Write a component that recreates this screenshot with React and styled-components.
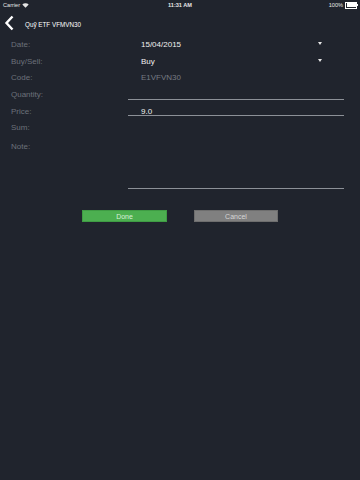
import React from 'react'
import styled, { createGlobalStyle } from 'styled-components'

const GlobalStyle = createGlobalStyle`
  html, body {
    margin: 0;
    padding: 0;
    background: #20242d;
  }
  body {
    font-family: "Liberation Sans", Arial, sans-serif;
  }
`

function App() {
  return (
    <Screen>
      <GlobalStyle />
      <StatusBar>
        <StatusLeft>
          Carrier
          <svg width="7" height="5" viewBox="0 0 7 5">
            <path d="M0.3 1.6 A4.5 4.5 0 0 1 6.7 1.6 L3.5 4.8 Z" fill="#e6e6e6" />
          </svg>
        </StatusLeft>
        <StatusTime>11:31 AM</StatusTime>
        <StatusRight>
          100%
          <Battery>
            <BatteryFill />
          </Battery>
        </StatusRight>
      </StatusBar>

      <NavBar>
        <BackButton>
          <svg width="10" height="16" viewBox="0 0 10 16">
            <polyline points="8.5,1.5 2.5,8 8.5,14.5" fill="none" stroke="#ffffff" strokeWidth="2.4" />
          </svg>
        </BackButton>
        <Title>Quỹ ETF VFMVN30</Title>
      </NavBar>

      <Form>
        <Row h={17}>
          <Label>Date:</Label>
          <Select>
            <Value>15/04/2015</Value>
            <Caret />
          </Select>
        </Row>
        <Row h={17}>
          <Label>Buy/Sell:</Label>
          <Select>
            <Value>Buy</Value>
            <Caret />
          </Select>
        </Row>
        <Row h={16}>
          <Label>Code:</Label>
          <Value muted>E1VFVN30</Value>
        </Row>
        <Row h={18}>
          <Label>Quantity:</Label>
          <Input h={14} defaultValue="" />
        </Row>
        <Row h={16}>
          <Label>Price:</Label>
          <Input h={12} defaultValue="9.0" />
        </Row>
        <Row h={16}>
          <Label>Sum:</Label>
          <Value />
        </Row>
        <NoteRow>
          <NoteLabel>Note:</NoteLabel>
          <NoteArea />
        </NoteRow>
      </Form>

      <Actions>
        <ActionButton kind="done">Done</ActionButton>
        <ActionButton kind="cancel">Cancel</ActionButton>
      </Actions>
    </Screen>
  )
}

export default App

const Screen = styled.div`
  width: 360px;
  height: 480px;
  background: #20242d;
  color: #e6e6e6;
  overflow: hidden;
`

const StatusBar = styled.div`
  height: 10px;
  display: flex;
  align-items: center;
  justify-content: space-between;
  padding: 0 3px;
  font-size: 5.6px;
  color: #e6e6e6;
  position: relative;
`

const StatusLeft = styled.div`
  display: flex;
  align-items: center;
  gap: 2px;
`

const StatusTime = styled.div`
  position: absolute;
  left: 0;
  right: 0;
  text-align: center;
  font-weight: bold;
  pointer-events: none;
`

const StatusRight = styled.div`
  display: flex;
  align-items: center;
  gap: 2px;
`

const Battery = styled.div`
  width: 9px;
  height: 4px;
  border: 0.5px solid #ffffff;
  padding: 0.5px;
  position: relative;
  display: flex;

  &::after {
    content: '';
    position: absolute;
    right: -2px;
    top: 1px;
    width: 1px;
    height: 2px;
    background: #ffffff;
  }
`

const BatteryFill = styled.div`
  flex: 1;
  background: #ffffff;
`

const NavBar = styled.div`
  height: 26px;
  display: flex;
  align-items: center;
  padding-left: 4px;
`

const BackButton = styled.div`
  width: 21px;
  height: 16px;
  display: flex;
  align-items: center;
  margin-top: 0px;
`

const Title = styled.div`
  font-size: 6.3px;
  color: #ffffff;
  margin-top: 2px;
`

const Form = styled.div`
  display: flex;
  flex-direction: column;
`

const Row = styled.div`
  height: ${p => p.h}px;
  display: grid;
  grid-template-columns: 128px 216px;
  align-items: center;
`

const Label = styled.div`
  padding-left: 11px;
  font-size: 8px;
  line-height: 10px;
  color: #6c717a;
`

const Select = styled.div`
  display: flex;
  align-items: center;
  justify-content: space-between;
  padding-right: 22px;
`

const Value = styled.div`
  padding-left: 13px;
  font-size: 8px;
  line-height: 10px;
  color: ${p => (p.muted ? '#767b83' : '#f0f0f0')};
`

const Caret = styled.span`
  width: 0;
  height: 0;
  border-left: 2px solid transparent;
  border-right: 2px solid transparent;
  border-top: 3px solid #e6e6e6;
  margin-top: -3px;
`

const Input = styled.input`
  align-self: start;
  box-sizing: border-box;
  height: ${p => p.h}px;
  width: 216px;
  margin: 0;
  padding: ${p => p.h - 8}px 0 0 13px;
  border: none;
  border-bottom: 1px solid #8c9097;
  background: transparent;
  color: #f0f0f0;
  font-family: "Liberation Sans", Arial, sans-serif;
  font-size: 8px;
  line-height: 7px;
  outline: none;
`

const NoteRow = styled.div`
  display: grid;
  grid-template-columns: 128px 216px;
  height: 53px;
`

const NoteLabel = styled(Label)`
  margin-top: 6px;
`

const NoteArea = styled.div`
  border-bottom: 1px solid #8c9097;
`

const Actions = styled.div`
  display: flex;
  justify-content: center;
  gap: 27px;
  margin-top: 21px;
`

const ActionButton = styled.div`
  box-sizing: border-box;
  width: ${p => (p.kind === 'done' ? 85 : 84)}px;
  height: 12px;
  display: flex;
  align-items: center;
  justify-content: center;
  font-size: 7px;
  background: ${p => (p.kind === 'done' ? '#4caf50' : '#808080')};
  border: 1px solid ${p => (p.kind === 'done' ? '#3f9c44' : '#6e6e6e')};
  color: ${p => (p.kind === 'done' ? '#d8eed8' : '#d6d6d6')};
`
